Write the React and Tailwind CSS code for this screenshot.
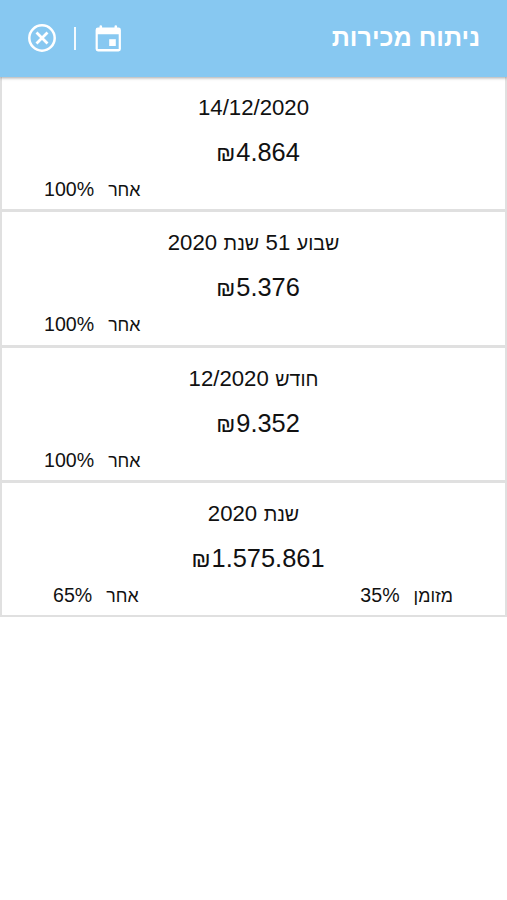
import React from 'react';

const periods = [
    { date: '14/12/2020', total: '4.864', other: '100%' },
    { label: 'שבוע', week: '51', labelYear: 'שנת', date: '2020', total: '5.376', other: '100%' },
    { label: 'חודש', date: '12/2020', total: '9.352', other: '100%' },
    { label: 'שנת', date: '2020', total: '1.575.861', other: '65%', cash: '35%' },
];

function Share({ label, value }) {
    return (
        <div className="flex items-baseline gap-[14px] text-[19.6px] leading-6">
            <span className="text-[17.8px]">{label}</span>
            <span dir="ltr">{value}</span>
        </div>
    );
}

function PeriodCard({ period }) {
    return (
        <div className="flex h-[135.3px] flex-col border-x-2 border-b-[3px] border-[#e0e0e0] bg-white last:h-[134.5px] last:border-b-2">
            <div className="mt-4 flex items-baseline justify-center gap-[6.5px] text-[22.2px] leading-[30px]">
                {period.label && <span className="text-[19.6px]">{period.label}</span>}
                {period.week && <span>{period.week}</span>}
                {period.labelYear && <span className="text-[19.6px]">{period.labelYear}</span>}
                <span dir="ltr">{period.date}</span>
            </div>
            <div dir="ltr" className="mt-[13px] flex items-baseline justify-center pl-[9px] text-[25.4px] leading-8">
                <span className="mr-[1px] text-[22.5px]">₪</span>
                <span>{period.total}</span>
            </div>
            <div className={period.cash ? 'mt-[7px] flex justify-between pr-[52px] pl-[51px]' : 'mt-[7px] flex justify-end pl-[42px]'}>
                {period.cash && <Share label="מזומן" value={period.cash} />}
                <Share label="אחר" value={period.other} />
            </div>
        </div>
    );
}

export default function App() {
    return (
        <div dir="rtl" className="min-h-screen bg-white font-['Liberation_Sans',sans-serif] text-[#111]">
            <header className="relative flex h-[77px] items-center justify-between bg-[#87c8f1] px-[27px] text-white shadow-[0_1px_3px_rgba(0,0,0,0.35)]">
                <h1 className="-mt-[1px] text-[25.2px] font-bold">ניתוח מכירות</h1>
                <div dir="ltr" className="-mt-[1px] flex items-center">
                    <svg className="size-[30px]" viewBox="0 0 30 30" fill="none" stroke="currentColor" strokeWidth="2.5">
                        <circle cx="15" cy="15" r="12.7" />
                        <path d="M9.5 9.5l11 11M20.5 9.5l-11 11" strokeWidth="2.8" />
                    </svg>
                    <span className="mr-[19px] ml-[17px] h-[23px] w-[1.5px] bg-white/90" />
                    <svg className="h-[27px] w-[27px]" viewBox="0 0 27 27" fill="currentColor">
                        <path d="M4.5 1.5A1.3 1.3 0 0 1 7.1 1.5V2.5H19.5V1.5A1.3 1.3 0 0 1 22.1 1.5V2.5H23.5A2.4 2.4 0 0 1 25.9 4.9V24A2.4 2.4 0 0 1 23.5 26.4H3A2.4 2.4 0 0 1 .6 24V4.9A2.4 2.4 0 0 1 3 2.5H4.5zM2.8 9.3v14.8h20.9V9.3z" fillRule="evenodd" />
                        <path d="M14.2 14.2h6.6v6.8h-6.6z" />
                    </svg>
                </div>
            </header>
            <main>
                {periods.map((period) => (
                    <PeriodCard key={period.total} period={period} />
                ))}
            </main>
        </div>
    );
}
